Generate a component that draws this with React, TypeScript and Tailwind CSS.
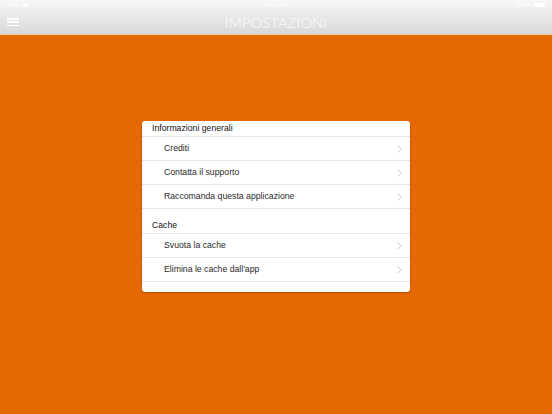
import React from "react";

const Chevron = () => (
  <svg width="5" height="8" viewBox="0 0 5 8" className="shrink-0">
    <path d="M0.6 0.6 L4.2 4 L0.6 7.4" fill="none" stroke="#c4c4c8" strokeWidth="0.9" />
  </svg>
);

const Row = ({ label }: { label: string }) => (
  <div className="flex h-[24px] items-center justify-between border-b border-[#e6e6e6] pl-[22px] pr-[8px]">
    <span className="text-[8.7px] text-[#2a2a2a]">{label}</span>
    <Chevron />
  </div>
);

const Header = ({ label, top }: { label: string; top?: boolean }) => (
  <div className={`flex items-end border-b border-[#e6e6e6] pl-[10px] pb-[1px] ${top ? "h-[16px]" : "h-[25px]"}`}>
    <span className="text-[8.7px] text-[#111]">{label}</span>
  </div>
);

export default function App() {
  return (
    <div
      className="flex h-[414px] w-[552px] flex-col overflow-hidden bg-[#e56800]"
      style={{ fontFamily: '"Liberation Sans", Arial, sans-serif' }}
    >
      <div className="relative flex h-[34px] shrink-0 flex-col bg-gradient-to-b from-[#f8f8f8] to-[#d8d8d8]">
        <div className="relative flex h-[10px] items-center justify-between px-[7px] text-[6px] text-white">
          <div className="flex items-center gap-[3px]">
            <span>iPad</span>
            <svg width="7" height="5" viewBox="0 0 7 5">
              <path d="M0.3 1.6 A4.5 4.5 0 0 1 6.7 1.6 L3.5 4.8 Z" fill="#fff" />
            </svg>
          </div>
          <span className="absolute left-1/2 -translate-x-1/2">9:41 AM</span>
          <div className="flex items-center gap-[3px]">
            <span>100%</span>
            <div className="h-[4px] w-[11px] rounded-[1px] bg-white" />
          </div>
        </div>
        <div className="relative flex flex-1 items-center justify-center">
          <div className="absolute left-[7px] top-[8px] flex w-[12px] flex-col gap-[1.8px]">
            <div className="h-[1.5px] bg-white" />
            <div className="h-[1.5px] bg-white" />
            <div className="h-[1.5px] bg-white" />
          </div>
          <span
            className="mt-[1px] text-[14.5px] font-light tracking-[0.2px] text-white"
            style={{ fontFamily: 'Lato, "Open Sans", sans-serif' }}
          >
            IMPOSTAZIONI
          </span>
        </div>
      </div>
      <div className="h-[1px] shrink-0 bg-[#f3c9a4]" />
      <div className="flex flex-1 justify-center pt-[86px]">
        <div className="h-[171px] w-[268px] rounded-[3px] bg-white shadow-[0_1px_2px_rgba(0,0,0,0.25)]">
          <Header label="Informazioni generali" top />
          <Row label="Crediti" />
          <Row label="Contatta il supporto" />
          <Row label="Raccomanda questa applicazione" />
          <Header label="Cache" />
          <Row label="Svuota la cache" />
          <Row label="Elimina le cache dall'app" />
        </div>
      </div>
    </div>
  );
}
